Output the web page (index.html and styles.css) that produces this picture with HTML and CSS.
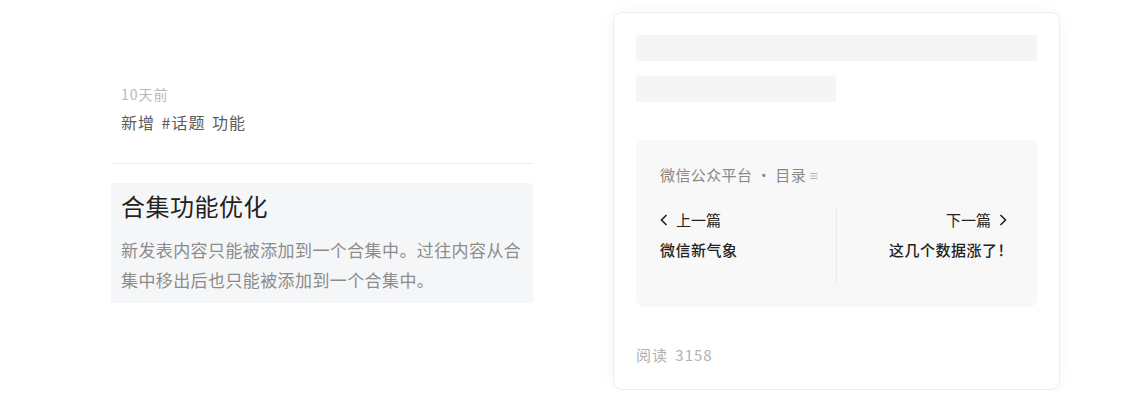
FILE: index.html
```html
<!DOCTYPE html>
<html lang="zh-CN">
<head>
<meta charset="utf-8">
<title>合集功能优化</title>
<link rel="stylesheet" href="styles.css">
</head>
<body>
<div class="page">
  <section class="feed">
    <div class="time">10天前</div>
    <div class="tag-line">新增 #话题 功能</div>
    <hr class="divider">
    <div class="update">
      <h2 class="update-title">合集功能优化</h2>
      <p class="update-text">新发表内容只能被添加到一个合集中。过往内容从合集中移出后也只能被添加到一个合集中。</p>
    </div>
  </section>

  <section class="card">
    <div class="skeleton skeleton-full"></div>
    <div class="skeleton skeleton-half"></div>

    <div class="nav-box">
      <div class="nav-head"><span>微信公众平台 · 目录</span>
        <svg class="menu-icon" width="8" height="8" viewBox="0 0 8 8"><path d="M0.5 1.5H7.5M0.5 4H7.5M0.5 6.5H7.5" stroke="#b5b5b5" stroke-width="1" fill="none"/></svg>
      </div>
      <div class="nav-row">
        <div class="nav-item nav-prev">
          <div class="nav-label">
            <svg class="chev" width="8" height="12" viewBox="0 0 8 12"><path d="M6.5 1L1.5 6L6.5 11" stroke="#222" stroke-width="1.6" fill="none"/></svg>
            <span>上一篇</span>
          </div>
          <div class="nav-title">微信新气象</div>
        </div>
        <div class="nav-item nav-next">
          <div class="nav-label nav-label-next">
            <span>下一篇</span>
            <svg class="chev" width="8" height="12" viewBox="0 0 8 12"><path d="M1.5 1L6.5 6L1.5 11" stroke="#222" stroke-width="1.6" fill="none"/></svg>
          </div>
          <div class="nav-title">这几个数据涨了！</div>
        </div>
      </div>
    </div>

    <div class="reads">阅读 3158</div>
  </section>
</div>
</body>
</html>
```

FILE: styles.css
```css
* { box-sizing: border-box; }

html, body {
  margin: 0;
  padding: 0;
  background: #fff;
}

body {
  font-family: "Noto Sans CJK SC", "Noto Sans", sans-serif;
  color: #222;
}

.page {
  display: flex;
  align-items: flex-start;
  gap: 80px;
  padding: 12px 0 0 111px;
}

/* left column */
.feed {
  width: 422px;
  padding-top: 72px;
}

.time {
  padding-left: 10px;
  font-size: 14px;
  line-height: 20px;
  color: #b8b8b8;
  letter-spacing: 1px;
}

.tag-line {
  margin-top: 6px;
  padding-left: 10px;
  font-size: 16px;
  line-height: 24px;
  color: #5c5c5c;
  letter-spacing: 1px;
  word-spacing: 2px;
}

.divider {
  margin: 29px 0 0;
  border: 0;
  height: 1px;
  background: #eeeeee;
}

.update {
  margin-top: 19px;
  background: #f5f6f7;
  border-radius: 3px;
  padding: 6px 10px 8px;
}

.update-title {
  margin: 0;
  font-size: 24px;
  line-height: 34px;
  font-weight: 400;
  color: #222;
  letter-spacing: 0.5px;
}

.update-text {
  margin: 12px 0 0;
  font-size: 17px;
  line-height: 30px;
  color: #8c8c8c;
  letter-spacing: 0.4px;
}

/* right card */
.card {
  width: 447px;
  border: 1px solid #ededed;
  border-radius: 9px;
  box-shadow: 0 0 18px rgba(0, 0, 0, 0.04);
  padding: 22px 22px 24px;
  background: #fff;
}

.skeleton {
  height: 26px;
  background: #f5f5f5;
  border-radius: 2px;
}

.skeleton-full { width: 100%; }

.skeleton-half {
  width: 200px;
  margin-top: 15px;
}

.nav-box {
  margin-top: 38px;
  background: #f8f8f8;
  border-radius: 8px;
  padding: 24px 24px 22px;
}

.nav-head {
  display: flex;
  align-items: center;
  gap: 4px;
  font-size: 15px;
  line-height: 22px;
  color: #888;
  letter-spacing: 0.4px;
}

.menu-icon { margin-top: 1px; }

.nav-row {
  display: flex;
  margin-top: 22px;
}

.nav-item {
  flex: 1;
  display: flex;
  flex-direction: column;
  gap: 8px;
  min-height: 77px;
  padding-top: 1px;
}

.nav-prev {
  border-right: 1px solid #ececec;
}

.nav-next {
  align-items: flex-end;
}

.nav-label {
  display: flex;
  align-items: center;
  gap: 8px;
  font-size: 15px;
  line-height: 22px;
  color: #222;
}

.nav-label-next {
  margin-right: 6px;
}

.nav-title {
  font-size: 15px;
  line-height: 22px;
  font-weight: 500;
  color: #222;
  letter-spacing: 0.5px;
}

.reads {
  margin-top: 38px;
  font-size: 15px;
  line-height: 20px;
  color: #b2b2b2;
  letter-spacing: 1px;
  word-spacing: 3px;
}
```
